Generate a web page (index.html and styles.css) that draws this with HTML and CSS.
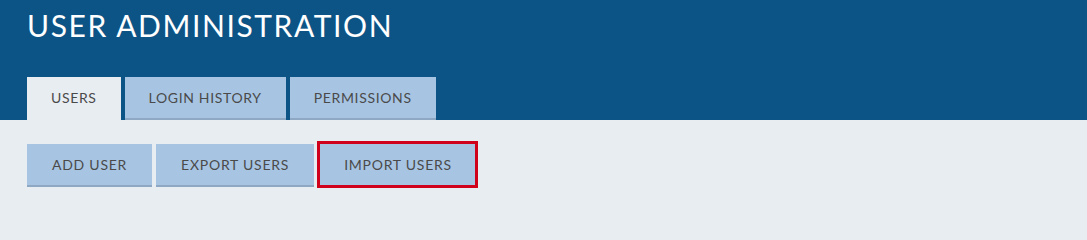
FILE: index.html
```html
<!DOCTYPE html>
<html>
<head>
<meta charset="utf-8">
<link rel="stylesheet" href="styles.css">
</head>
<body>
<header class="header">
  <h1 class="title">USER ADMINISTRATION</h1>
  <nav class="tabs">
    <div class="tab tab-active">USERS</div>
    <div class="tab">LOGIN HISTORY</div>
    <div class="tab">PERMISSIONS</div>
  </nav>
</header>
<main class="content">
  <div class="actions">
    <div class="btn">ADD USER</div>
    <div class="btn">EXPORT USERS</div>
    <div class="btn btn-highlight">IMPORT USERS</div>
  </div>
</main>
</body>
</html>
```
FILE: styles.css
```css
html, body {
  margin: 0;
  padding: 0;
}
body {
  font-family: Lato, "Open Sans", sans-serif;
  background: #e8edf2;
  color: #444;
  min-height: 203px;
}
.header {
  background: #0c5486;
  height: 120px;
  padding: 0 27px;
  box-sizing: border-box;
  display: flex;
  flex-direction: column;
}
.title {
  margin: 0;
  padding-top: 5px;
  font-size: 30px;
  line-height: 40px;
  font-weight: 400;
  letter-spacing: 1.6px;
  color: #ffffff;
}
.tabs {
  margin-top: auto;
  display: flex;
  gap: 4px;
}
.tab {
  height: 43px;
  box-sizing: border-box;
  padding: 0 24px;
  display: flex;
  align-items: center;
  font-size: 14px;
  letter-spacing: 0.65px;
  color: #4a4a4a;
  background: #a7c5e3;
  border-bottom: 2px solid #8ea8c3;
}
.tab-active {
  background: #e8edf2;
  border-bottom-color: #e8edf2;
}
.content {
  padding: 24px 27px 0;
}
.actions {
  display: flex;
  align-items: flex-start;
  gap: 4px;
}
.btn {
  height: 43px;
  box-sizing: border-box;
  padding: 0 25px;
  display: flex;
  align-items: center;
  font-size: 14px;
  letter-spacing: 0.75px;
  color: #4a4a4a;
  background: #a7c5e3;
  border-bottom: 2px solid #8ea8c3;
}
.btn-highlight {
  height: 47px;
  margin-top: -3px;
  margin-left: -1px;
  padding: 0 23px 0 24px;
  border: 3px solid #d0021b;
}
```
